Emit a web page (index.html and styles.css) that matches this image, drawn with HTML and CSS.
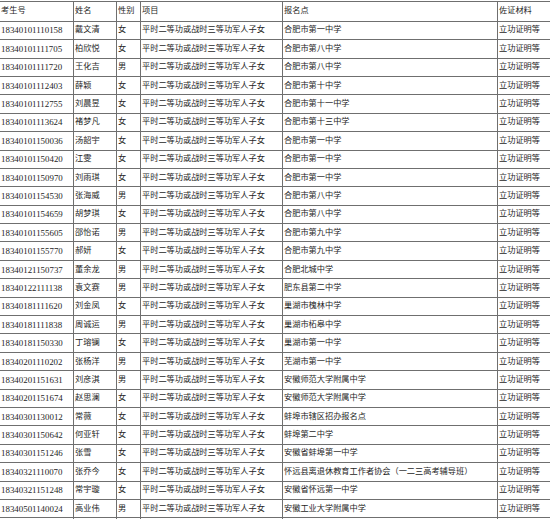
FILE: index.html
```html
<!DOCTYPE html>
<html lang="zh-CN">
<head>
<meta charset="utf-8">
<title>名单</title>
<link rel="stylesheet" href="styles.css">
</head>
<body>
<table class="list">
<colgroup>
<col class="c-id"><col class="c-name"><col class="c-sex"><col class="c-item"><col class="c-site"><col class="c-doc">
</colgroup>
<thead>
<tr class="head"><td>考生号</td><td>姓名</td><td>性别</td><td>项目</td><td>报名点</td><td>佐证材料</td></tr>
</thead>
<tbody>
<tr><td class="num">18340101110158</td><td>戴文清</td><td>女</td><td>平时二等功或战时三等功军人子女</td><td>合肥市第一中学</td><td>立功证明等</td></tr>
<tr><td class="num">18340101111705</td><td>柏欣悦</td><td>女</td><td>平时二等功或战时三等功军人子女</td><td>合肥市第八中学</td><td>立功证明等</td></tr>
<tr><td class="num">18340101111720</td><td>王化吉</td><td>男</td><td>平时二等功或战时三等功军人子女</td><td>合肥市第八中学</td><td>立功证明等</td></tr>
<tr><td class="num">18340101112403</td><td>薛颖</td><td>女</td><td>平时二等功或战时三等功军人子女</td><td>合肥市第十中学</td><td>立功证明等</td></tr>
<tr><td class="num">18340101112755</td><td>刘晨昱</td><td>女</td><td>平时二等功或战时三等功军人子女</td><td>合肥市第十一中学</td><td>立功证明等</td></tr>
<tr><td class="num">18340101113624</td><td>褚梦凡</td><td>女</td><td>平时二等功或战时三等功军人子女</td><td>合肥市第十三中学</td><td>立功证明等</td></tr>
<tr><td class="num">18340101150036</td><td>汤韶宇</td><td>女</td><td>平时二等功或战时三等功军人子女</td><td>合肥市第一中学</td><td>立功证明等</td></tr>
<tr><td class="num">18340101150420</td><td>江雯</td><td>女</td><td>平时二等功或战时三等功军人子女</td><td>合肥市第一中学</td><td>立功证明等</td></tr>
<tr><td class="num">18340101150970</td><td>刘雨琪</td><td>女</td><td>平时二等功或战时三等功军人子女</td><td>合肥市第一中学</td><td>立功证明等</td></tr>
<tr><td class="num">18340101154530</td><td>张海威</td><td>男</td><td>平时二等功或战时三等功军人子女</td><td>合肥市第八中学</td><td>立功证明等</td></tr>
<tr><td class="num">18340101154659</td><td>胡梦琪</td><td>女</td><td>平时二等功或战时三等功军人子女</td><td>合肥市第八中学</td><td>立功证明等</td></tr>
<tr><td class="num">18340101155605</td><td>邵怡诺</td><td>男</td><td>平时二等功或战时三等功军人子女</td><td>合肥市第九中学</td><td>立功证明等</td></tr>
<tr><td class="num">18340101155770</td><td>郝妍</td><td>女</td><td>平时二等功或战时三等功军人子女</td><td>合肥市第九中学</td><td>立功证明等</td></tr>
<tr><td class="num">18340121150737</td><td>董余龙</td><td>男</td><td>平时二等功或战时三等功军人子女</td><td>合肥北城中学</td><td>立功证明等</td></tr>
<tr><td class="num">18340122111138</td><td>袁文赛</td><td>男</td><td>平时二等功或战时三等功军人子女</td><td>肥东县第二中学</td><td>立功证明等</td></tr>
<tr><td class="num">18340181111620</td><td>刘金凤</td><td>女</td><td>平时二等功或战时三等功军人子女</td><td>巢湖市槐林中学</td><td>立功证明等</td></tr>
<tr><td class="num">18340181111838</td><td>周诚运</td><td>男</td><td>平时二等功或战时三等功军人子女</td><td>巢湖市柘皋中学</td><td>立功证明等</td></tr>
<tr><td class="num">18340181150330</td><td>丁瑢镧</td><td>女</td><td>平时二等功或战时三等功军人子女</td><td>巢湖市第一中学</td><td>立功证明等</td></tr>
<tr><td class="num">18340201110202</td><td>张杨洋</td><td>男</td><td>平时二等功或战时三等功军人子女</td><td>芜湖市第一中学</td><td>立功证明等</td></tr>
<tr><td class="num">18340201151631</td><td>刘彦淇</td><td>男</td><td>平时二等功或战时三等功军人子女</td><td>安徽师范大学附属中学</td><td>立功证明等</td></tr>
<tr><td class="num">18340201151674</td><td>赵思澜</td><td>女</td><td>平时二等功或战时三等功军人子女</td><td>安徽师范大学附属中学</td><td>立功证明等</td></tr>
<tr><td class="num">18340301130012</td><td>常薇</td><td>女</td><td>平时二等功或战时三等功军人子女</td><td>蚌埠市辖区招办报名点</td><td>立功证明等</td></tr>
<tr><td class="num">18340301150642</td><td>何亚轩</td><td>女</td><td>平时二等功或战时三等功军人子女</td><td>蚌埠第二中学</td><td>立功证明等</td></tr>
<tr><td class="num">18340301151246</td><td>张雪</td><td>女</td><td>平时二等功或战时三等功军人子女</td><td>安徽省蚌埠第一中学</td><td>立功证明等</td></tr>
<tr><td class="num">18340321110070</td><td>张乔今</td><td>女</td><td>平时二等功或战时三等功军人子女</td><td>怀远县离退休教育工作者协会（一二三高考辅导班）</td><td>立功证明等</td></tr>
<tr><td class="num">18340321151248</td><td>常宇璇</td><td>女</td><td>平时二等功或战时三等功军人子女</td><td>安徽省怀远第一中学</td><td>立功证明等</td></tr>
<tr><td class="num">18340501140024</td><td>高业伟</td><td>男</td><td>平时二等功或战时三等功军人子女</td><td>安徽工业大学附属中学</td><td>立功证明等</td></tr>
<tr><td class="num">&nbsp;</td><td></td><td></td><td></td><td></td><td></td></tr>
</tbody>
</table>
</body>
</html>
```
FILE: styles.css
```css
html, body {
  margin: 0;
  padding: 0;
  background: #ffffff;
  overflow: hidden;
}
.list {
  margin: 1px 0 0 -1px;
  border-collapse: collapse;
  table-layout: fixed;
  width: 560px;
  font-family: "Liberation Serif", "Noto Sans CJK SC", serif;
  font-size: 8.2px;
  color: #1e1e1e;
  border: 1px solid #6f6f6f;
}
.c-id { width: 74px; }
.c-name { width: 43px; }
.c-sex { width: 24px; }
.c-item { width: 142px; }
.c-site { width: 215px; }
.c-doc { width: 62px; }
.list td {
  border: 1px solid #6f6f6f;
  padding: 0 0 0 1px;
  height: 17.4px;
  line-height: 10px;
  vertical-align: middle;
  white-space: nowrap;
  overflow: hidden;
}
.list .head td {
  height: 18.8px;
}
.list td.num {
  font-size: 8.9px;
}
```
